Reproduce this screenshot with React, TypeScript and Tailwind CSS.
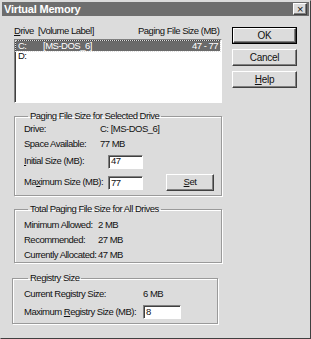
import React from "react";

const raised =
  "border border-t-white border-l-white border-r-[#404040] border-b-[#404040] shadow-[inset_-1px_-1px_0_#808080]";
const sunken =
  "border border-t-[#808080] border-l-[#808080] border-r-white border-b-white shadow-[inset_1px_1px_0_#404040]";

const Row = ({ label, value, vx }: { label: React.ReactNode; value: string; vx: string }) => (
  <div className="flex h-[15px] items-center">
    <span className={vx}>{label}</span>
    <span>{value}</span>
  </div>
);

const Group = ({
  title,
  className,
  children,
}: {
  title: string;
  className: string;
  children: React.ReactNode;
}) => (
  <fieldset
    className={`border border-[#9a9a9a] shadow-[1px_1px_0_white,inset_1px_1px_0_white] ${className}`}
  >
    <legend className="ml-[4px] px-[2px] leading-[12px]">{title}</legend>
    {children}
  </fieldset>
);

const Button = ({ children, def }: { children: React.ReactNode; def?: boolean }) => (
  <div className={def ? "border border-black" : ""}>
    <div
      className={`${raised} flex items-center justify-center bg-[#dcdcdc] ${
        def ? "h-[15px]" : "h-[17px]"
      }`}
    >
      {children}
    </div>
  </div>
);

export default function App() {
  return (
    <div
      className="flex h-[339px] w-[311px] flex-col whitespace-nowrap border border-t-[#dcdcdc] border-l-[#dcdcdc] border-r-[#404040] border-b-[#404040] bg-[#dcdcdc] text-[9.5px] tracking-[-0.5px] text-[#111]"
      style={{ fontFamily: '"Liberation Sans", Arial, sans-serif' }}
    >
      {/* title bar */}
      <div className="mx-[1px] mt-[1px] flex h-[14px] items-center justify-between bg-[#6e6e6e] pl-[2px] pr-[2px]">
        <span className="text-[11px] font-bold tracking-[-0.2px] text-white">Virtual Memory</span>
        <div className={`${raised} flex h-[12px] w-[14px] items-center justify-center bg-[#dcdcdc] text-[11px] leading-none`}>
          ×
        </div>
      </div>

      <div className="flex pl-[13px] pr-[12px]">
        {/* left column */}
        <div className="w-[208px]">
          <div className="mt-[9px] flex h-[13px] items-center">
            <span className="w-[124px]">
              <u>D</u>rive&nbsp;&nbsp;[Volume Label]
            </span>
            <span>Paging File Size (MB)</span>
          </div>

          <div className={`${sunken} mt-[1px] h-[64px] bg-white p-[1px]`}>
            <div className="flex h-[10px] items-center bg-[#6a6a6a] text-white outline-1 outline-dotted outline-[#dcdcdc]">
              <span className="w-[27px] pl-[2px]">C:</span>
              <span className="w-[149px]">[MS-DOS_6]</span>
              <span>47 - 77</span>
            </div>
            <div className="flex h-[11px] items-center pl-[2px]">D:</div>
          </div>

          <Group title="Paging File Size for Selected Drive" className="mt-[7px] h-[86px] pl-[9px] pr-[6px]">
            <Row label="Drive:" value="C:  [MS-DOS_6]" vx="w-[76px]" />
            <Row label="Space Available:" value="77 MB" vx="w-[76px]" />
            <div className="mt-[1px] flex h-[17px] items-center">
              <span className="w-[84px]">
                <u>I</u>nitial Size (MB):
              </span>
              <div className={`${sunken} flex h-[14px] w-[35px] items-center bg-white pl-[2px]`}>47</div>
            </div>
            <div className="mt-[3px] flex h-[18px] items-center">
              <span className="w-[84px]">
                Ma<u>x</u>imum Size (MB):
              </span>
              <div className={`${sunken} mt-[2px] flex h-[14px] w-[35px] items-center bg-white pl-[2px]`}>77</div>
              <div className="ml-[23px] w-[48px]">
                <Button>
                  <u>S</u>et
                </Button>
              </div>
            </div>
          </Group>

          <Group title="Total Paging File Size for All Drives" className="mt-[7px] h-[60px] pl-[9px]">
            <div className="mt-[3px]" />
            <Row label="Minimum Allowed:" value="2 MB" vx="w-[74px]" />
            <Row label="Recommended:" value="27 MB" vx="w-[74px]" />
            <Row label="Currently Allocated:" value="47 MB" vx="w-[74px]" />
          </Group>

          <Group title="Registry Size" className="-ml-[2px] mt-[9px] h-[52px] w-[206px] pl-[11px]">
            <div className="mt-[3px]" />
            <Row label="Current Registry Size:" value="6 MB" vx="w-[119px]" />
            <div className="mt-[2px] flex h-[16px] items-center">
              <span className="w-[119px]">
                Maximum <u>R</u>egistry Size (MB):
              </span>
              <div className={`${sunken} flex h-[14px] w-[38px] items-center bg-white pl-[2px]`}>8</div>
            </div>
          </Group>
        </div>

        {/* buttons */}
        <div className="ml-[10px] mt-[11px] flex w-[65px] flex-col gap-[5px] text-[10px] tracking-[-0.3px]">
          <Button def>OK</Button>
          <Button>Cancel</Button>
          <Button>
            <u>H</u>elp
          </Button>
        </div>
      </div>
    </div>
  );
}
